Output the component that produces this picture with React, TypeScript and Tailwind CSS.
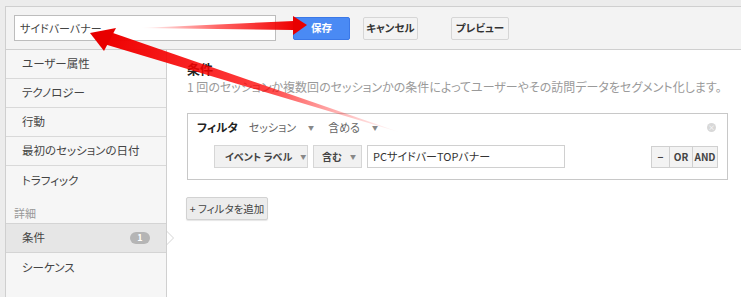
import React from "react";

const font = { fontFamily: '"Noto Sans CJK JP", "Noto Sans", Arial, sans-serif' };

function Caret({ ml = "ml-[8px]" }: { ml?: string }) {
  return <span className={`${ml} inline-block text-[6px] text-[#888] align-middle`}>▼</span>;
}

export default function App() {
  const sideItems = ["ユーザー属性", "テクノロジー", "行動", "最初のセッションの日付"];
  return (
    <div
      className="relative w-[741px] h-[297px] overflow-hidden bg-[#ececec] pl-[5px] pt-[6px] whitespace-nowrap [font-feature-settings:'palt']"
      style={font}
    >
      <div className="flex flex-col h-full border-l border-t border-[#cfcfcf] bg-white">
        {/* Header */}
        <div className="h-[43px] shrink-0 flex items-center bg-[#f3f3f3] border-b border-[#cfcfcf] pl-[8px]">
          <div className="w-[262px] h-[26px] bg-white border border-[#bdbdbd] flex items-center pl-[5px] text-[11px] text-[#444]">
            サイドバーバナー
          </div>
          <button className="ml-[17px] w-[57px] h-[23px] rounded-[2px] bg-[#4a8af4] border border-[#3b78e7] text-white text-[10.5px] font-bold">
            保存
          </button>
          <button className="ml-[13px] w-[55px] h-[23px] rounded-[2px] bg-[#f3f3f3] border border-[#d6d6d6] text-[#333] text-[10.5px] font-bold">
            キャンセル
          </button>
          <button className="ml-[33px] w-[58px] h-[23px] rounded-[2px] bg-[#f3f3f3] border border-[#d6d6d6] text-[#333] text-[10.5px] font-bold">
            プレビュー
          </button>
        </div>
        {/* Body */}
        <div className="flex flex-1 min-h-0">
          <div className="relative w-[161px] shrink-0 bg-[#f6f6f6] border-r border-[#d0d0d0] flex flex-col">
            {sideItems.map((t) => (
              <div key={t} className="h-[29px] shrink-0 flex items-center pl-[16px] border-b border-[#d9d9d9] text-[11.5px] text-[#444]">
                {t}
              </div>
            ))}
            <div className="h-[29px] shrink-0 flex items-center pl-[16px] text-[11.5px] text-[#444]">トラフィック</div>
            <div className="h-[28px] shrink-0 flex items-end pb-[2px] pl-[8px] text-[11px] text-[#999]">詳細</div>
            <div className="relative h-[30px] shrink-0 flex items-center pl-[16px] border-y border-[#d4d4d4] bg-[#e6e6e6] text-[11.5px] text-[#444]">
              条件
              <span className="absolute left-[124px] top-[8px] w-[20px] h-[12px] rounded-full bg-[#b5b5b5] text-white text-[9px] font-bold leading-[12px] text-center">1</span>
              <span className="absolute -right-[8px] top-[7px] w-0 h-0 border-y-[7px] border-y-transparent border-l-[7px] border-l-[#d4d4d4]" />
              <span className="absolute -right-[7px] top-[8px] w-0 h-0 border-y-[6px] border-y-transparent border-l-[6px] border-l-white" />
            </div>
            <div className="h-[29px] shrink-0 flex items-center pl-[16px] text-[11.5px] text-[#444]">シーケンス</div>
          </div>
          <div className="flex-1 pl-[20px] pr-[8px] pt-[10px]">
            <div className="text-[13px] font-bold text-[#222] leading-[18px]">条件</div>
            <div className="text-[12px] text-[#9a9a9a] leading-[18px]">
              1 回のセッションか複数回のセッションかの条件によってユーザーやその訪問データをセグメント化します。
            </div>
            <div className="mt-[17px] w-[541px] h-[67px] border border-[#c8c8c8] relative">
              <div className="flex items-center h-[27px] pl-[9px] text-[11px]">
                <span className="font-bold text-[#222] text-[11.5px]">フィルタ</span>
                <span className="ml-[11px] text-[#666]">セッション</span>
                <Caret ml="ml-[12px]" />
                <span className="ml-[14px] text-[#666]">含める</span>
                <Caret ml="ml-[12px]" />
              </div>
              <span className="absolute right-[11px] top-[9px] w-[9px] h-[9px] rounded-full bg-[#d8d8d8] flex items-center justify-center text-white text-[7px] leading-none">×</span>
              <div className="flex items-center pl-[26px] pr-[9px] mt-[4px]">
                <div className="w-[94px] h-[23px] bg-[#f1f1f1] border border-[#d6d6d6] flex items-center pl-[10px] text-[10px] font-bold text-[#444]">
                  イベント ラベル<Caret />
                </div>
                <div className="ml-[5px] w-[49px] h-[23px] bg-[#f1f1f1] border border-[#d6d6d6] flex items-center pl-[8px] text-[10px] font-bold text-[#444]">
                  含む<Caret />
                </div>
                <div className="ml-[5px] w-[198px] h-[23px] bg-white border border-[#d0d0d0] flex items-center pl-[5px] text-[11px] text-[#333]">
                  PCサイドバーTOPバナー
                </div>
                <div className="ml-auto flex h-[22px] border border-[#d0d0d0] bg-[#f3f3f3] text-[10px] font-bold text-[#444]">
                  <div className="w-[18px] flex items-center justify-center border-r border-[#d0d0d0]">−</div>
                  <div className="w-[23px] flex items-center justify-center border-r border-[#d0d0d0]">OR</div>
                  <div className="w-[24px] flex items-center justify-center">AND</div>
                </div>
              </div>
            </div>
            <button className="mt-[17px] -ml-[1px] w-[82px] h-[23px] rounded-[2px] bg-[#ececec] border border-[#d2d2d2] shadow-[0_1px_1px_rgba(0,0,0,0.1)] text-[10.5px] text-[#444]">
              + フィルタを追加
            </button>
          </div>
        </div>
      </div>
      {/* Annotation arrows */}
      <svg className="absolute left-0 top-0 pointer-events-none" width="741" height="297">
        <defs>
          <linearGradient id="g1" x1="140" y1="0" x2="295" y2="0" gradientUnits="userSpaceOnUse">
            <stop offset="0" stopColor="#ff0000" stopOpacity="0" />
            <stop offset="0.5" stopColor="#f00" stopOpacity="0.6" />
            <stop offset="1" stopColor="#e00" stopOpacity="1" />
          </linearGradient>
          <linearGradient id="g2" x1="100" y1="40" x2="400" y2="135" gradientUnits="userSpaceOnUse">
            <stop offset="0" stopColor="#e00" stopOpacity="1" />
            <stop offset="0.55" stopColor="#f00" stopOpacity="0.75" />
            <stop offset="1" stopColor="#ff4040" stopOpacity="0" />
          </linearGradient>
        </defs>
        <polygon points="140,28 294,21 294,30" fill="url(#g1)" />
        <polygon points="293,16 307,25 293,35" fill="#e80000" />
        <polygon points="104,44 113,33 402,133" fill="url(#g2)" />
        <polygon points="90,33 116,28 104,51" fill="#e80000" />
      </svg>
    </div>
  );
}
